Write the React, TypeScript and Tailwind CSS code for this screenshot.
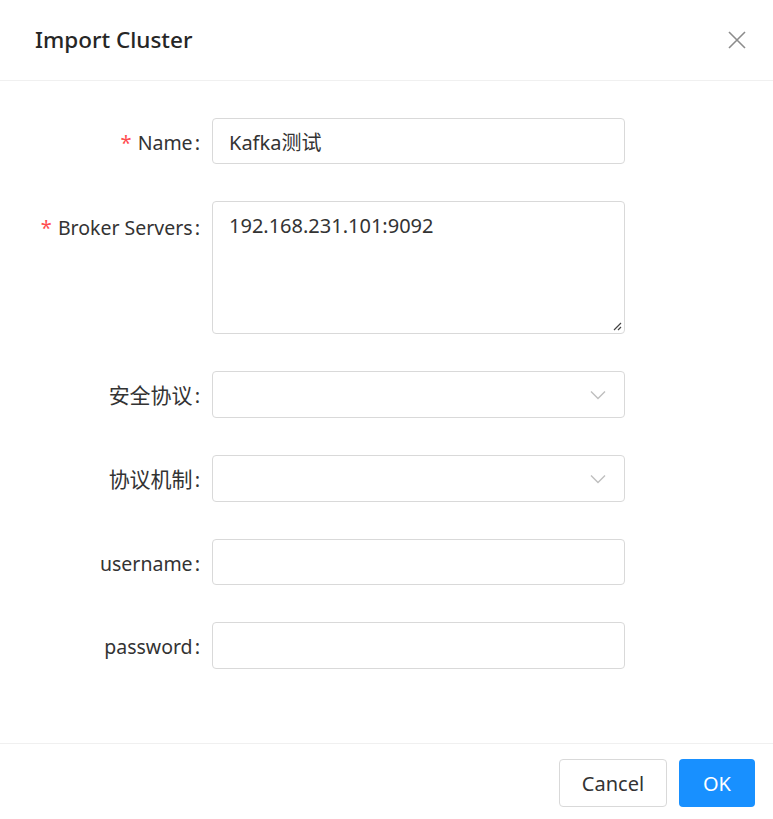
import React from 'react';

const labelCls = 'flex items-center justify-end h-[46px] pt-[4px] pr-[12px] text-[#333333] whitespace-nowrap';

function Label({ text, required, cjk }: { text: string; required?: boolean; cjk?: boolean }) {
  return (
    <div className={labelCls}>
      {required && <span className="text-[#ff4d4f] mr-[6px] text-[20px] leading-none">*</span>}
      <span className={cjk ? 'text-[21px]' : 'text-[19.5px]'}>{text}</span>
      <span className="ml-[2px]">:</span>
    </div>
  );
}

function Chevron() {
  return (
    <svg width="18" height="18" viewBox="0 0 18 18" fill="none" className="text-[#bfbfbf]">
      <path d="M2 5.5 L9 12.5 L16 5.5" stroke="currentColor" strokeWidth="1.4" />
    </svg>
  );
}

export default function App() {
  return (
    <div
      className="w-[773px] h-[819px] bg-white flex flex-col text-[20px] text-[#333333]"
      style={{ fontFamily: '"Noto Sans", "Noto Sans CJK SC", sans-serif' }}
    >
      {/* header */}
      <div className="h-[81px] flex items-center justify-between pl-[35px] pr-[26px] border-b border-[#f0f0f0]">
        <div className="text-[22.5px] font-medium text-[#262626]">Import Cluster</div>
        <svg width="20" height="20" viewBox="0 0 20 20" className="text-[#8c8c8c]">
          <path d="M2 2 L18 18 M18 2 L2 18" stroke="currentColor" strokeWidth="1.6" />
        </svg>
      </div>

      {/* body */}
      <div className="flex-1 pt-[37px] pl-[35px]">
        <div className="grid grid-cols-[177px_413px] gap-y-[37px]">
          <Label text="Name" required />
          <div className="h-[46px] border border-[#d9d9d9] rounded-[4px] flex items-center px-[16px] pt-[3px]">Kafka测试</div>

          <div className="self-start pt-[2px]">
            <Label text="Broker Servers" required />
          </div>
          <div className="relative h-[133px] border border-[#d9d9d9] rounded-[4px] px-[16px] pt-[9px] leading-[30px]">
            192.168.231.101:9092
            <svg width="10" height="10" viewBox="0 0 10 10" className="absolute right-[2px] bottom-[2px] text-[#444]">
              <path d="M2 9 L9 2 M6 9 L9 6" stroke="currentColor" strokeWidth="1.2" />
            </svg>
          </div>

          <Label text="安全协议" cjk />
          <div className="h-[47px] border border-[#d9d9d9] rounded-[4px] flex items-center justify-end pr-[17px]">
            <Chevron />
          </div>

          <Label text="协议机制" cjk />
          <div className="h-[47px] border border-[#d9d9d9] rounded-[4px] flex items-center justify-end pr-[17px]">
            <Chevron />
          </div>

          <Label text="username" />
          <div className="h-[46px] border border-[#d9d9d9] rounded-[4px]" />

          <Label text="password" />
          <div className="h-[47px] border border-[#d9d9d9] rounded-[4px]" />
        </div>
      </div>

      {/* footer */}
      <div className="h-[76px] border-t border-[#f0f0f0] flex items-start justify-end gap-[12px] pt-[15px] pr-[18px]">
        <button className="h-[48px] w-[108px] border border-[#d9d9d9] rounded-[4px] bg-white text-[#333333] text-[20px] pt-[2px]">
          Cancel
        </button>
        <button className="h-[48px] w-[76px] rounded-[4px] bg-[#1890ff] text-white text-[20px] pt-[2px]">OK</button>
      </div>
    </div>
  );
}
